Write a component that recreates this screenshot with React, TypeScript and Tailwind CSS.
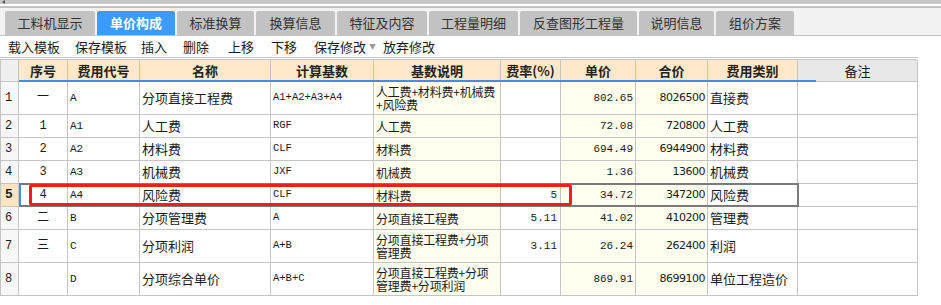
import React from "react";

const cols = "grid grid-cols-[18px_49px_72px_131px_103px_127px_60px_75px_72px_90px_120px]";
const cjk = "font-['Noto_Sans_CJK_SC',sans-serif]";
const mono = "font-['Liberation_Mono','Noto_Sans_CJK_SC',monospace]";

const tabs = ["工料机显示", "单价构成", "标准换算", "换算信息", "特征及内容", "工程量明细", "反查图形工程量", "说明信息", "组价方案"];
const tabWidths = ["w-[90px]", "w-[78px]", "w-[77px]", "w-[79px]", "w-[90px]", "w-[89px]", "w-[117px]", "w-[75px]", "w-[78px]"];
const tools = [
  { t: "载入模板", m: "mr-[15px]" },
  { t: "保存模板", m: "mr-[14px]" },
  { t: "插入", m: "mr-[16px]" },
  { t: "删除", m: "mr-[19px]" },
  { t: "上移", m: "mr-[17px]" },
  { t: "下移", m: "mr-[17px]" },
];

type Row = {
  no: string; idx: string; code: string; name: string; base: string; desc: string;
  rate: string; price: string; total: string; kind: string; h: string;
};

const rows: Row[] = [
  { no: "1", idx: "一", code: "A", name: "分项直接工程费", base: "A1+A2+A3+A4", desc: "人工费+材料费+机械费+风险费", rate: "", price: "802.65", total: "8026500", kind: "直接费", h: "h-[33px]" },
  { no: "2", idx: "1", code: "A1", name: "人工费", base: "RGF", desc: "人工费", rate: "", price: "72.08", total: "720800", kind: "人工费", h: "h-[23px]" },
  { no: "3", idx: "2", code: "A2", name: "材料费", base: "CLF", desc: "材料费", rate: "", price: "694.49", total: "6944900", kind: "材料费", h: "h-[23px]" },
  { no: "4", idx: "3", code: "A3", name: "机械费", base: "JXF", desc: "机械费", rate: "", price: "1.36", total: "13600", kind: "机械费", h: "h-[23px]" },
  { no: "5", idx: "4", code: "A4", name: "风险费", base: "CLF", desc: "材料费", rate: "5", price: "34.72", total: "347200", kind: "风险费", h: "h-[23px]" },
  { no: "6", idx: "二", code: "B", name: "分项管理费", base: "A", desc: "分项直接工程费", rate: "5.11", price: "41.02", total: "410200", kind: "管理费", h: "h-[23px]" },
  { no: "7", idx: "三", code: "C", name: "分项利润", base: "A+B", desc: "分项直接工程费+分项管理费", rate: "3.11", price: "26.24", total: "262400", kind: "利润", h: "h-[33px]" },
  { no: "8", idx: "", code: "D", name: "分项综合单价", base: "A+B+C", desc: "分项直接工程费+分项管理费+分项利润", rate: "", price: "869.91", total: "8699100", kind: "单位工程造价", h: "h-[33px]" },
];

const cell = "border-r border-b border-[#c4c4c4] flex items-center overflow-hidden";

export default function App() {
  return (
    <div className="w-[941px] h-[305px] bg-white overflow-hidden text-[#1a1a1a]">
      {/* top strip */}
      <div className="h-[4px] bg-[#c8c8c8] flex items-center pl-[2px]">
        <div className="w-0 h-0 border-y-[2px] border-y-transparent border-r-[3px] border-r-[#555]" />
      </div>
      <div className="h-[2px] bg-white" />
      <div className="h-[2px] bg-[#c2c2c2]" />
      <div className="h-[28px] bg-[#f2f2f2] border-b border-[#c2c2c2] flex items-end pl-[5px] gap-[2px]">
        {tabs.map((t, i) => (
          <div
            key={t}
            className={`${tabWidths[i]} h-[24px] rounded-t-[2px] flex items-center justify-center text-[13px] ${cjk} ${
              i === 1 ? "bg-[#3d9bff] text-white font-bold" : "bg-[#c2c2c2] text-[#333]"
            }`}
          >
            {t}
          </div>
        ))}
      </div>
      {/* toolbar */}
      <div className={`h-[22px] w-[918px] border-b border-[#c4c4c4] flex items-center pl-[8px] text-[13px] ${cjk}`}>
        {tools.map((t) => (
          <span key={t.t} className={t.m}>{t.t}</span>
        ))}
        <span>保存修改</span>
        <span className="text-[7px] text-[#999] ml-[3px] mr-[7px]">▼</span>
        <span>放弃修改</span>
      </div>
      {/* table */}
      <div className="mt-[1px] w-[917px] border-l border-t border-[#c4c4c4]">
        <div className={`${cols} h-[22px] text-[13px] font-bold ${cjk}`}>
          <div className={`${cell} bg-[#efefef]`} />
          {["序号", "费用代号", "名称", "计算基数", "基数说明", "费率(%)", "单价", "合价", "费用类别"].map((h) => (
            <div key={h} className={`${cell} justify-center bg-[#ffe7c9] text-[#222]`}>{h}</div>
          ))}
          <div className={`${cell} justify-center bg-[#e8e8e8] font-normal`}>备注</div>
        </div>
        <div className="h-[2px] w-[797px] bg-[#3d8fe8] -mt-[2px] ml-[18px] relative" />
        {rows.map((r) => {
          const sel = r.no === "5";
          return (
            <div key={r.no} className={`${cols} ${r.h} relative`}>
              <div className={`${cell} pl-[4px] text-[12px] ${mono} ${sel ? "bg-[#ffe4c2] font-bold text-[13px]" : "bg-[#f7f7f7]"}`}>{r.no}</div>
              <div className={`${cell} justify-center text-[12px] ${mono}`}>{r.idx}</div>
              <div className={`${cell} pl-[2px] text-[11px] ${mono}`}>{r.code}</div>
              <div className={`${cell} pl-[2px] text-[13px] ${cjk}`}>{r.name}</div>
              <div className={`${cell} pl-[2px] text-[10.5px] ${mono}`}>{r.base}</div>
              <div className={`${cell} pl-[2px] bg-[#fffff0] text-[12px] leading-[13px] tracking-[-0.2px] ${cjk}`}>{r.desc}</div>
              <div className={`${cell} justify-end pr-[3px] text-[11px] ${mono}`}>{r.rate}</div>
              <div className={`${cell} justify-end pr-[2px] bg-[#fffff0] text-[11px] ${mono}`}>{r.price}</div>
              <div className={`${cell} justify-end pr-[2px] bg-[#fffff0] text-[11px] font-['DejaVu_Sans',sans-serif] tracking-[-0.5px]`}>{r.total}</div>
              <div className={`${cell} pl-[2px] text-[13px] ${cjk}`}>{r.kind}</div>
              <div className={cell} />
              {sel && (
                <>
                  <div className="absolute left-[18px] top-[-1px] w-[780px] h-[24px] border-2 border-[#7a7a7a] border-l-[#3d8fe8] border-l-[2px] pointer-events-none" />
                  <div className="absolute left-[28px] top-[0px] w-[543px] h-[22px] border-[3px] border-[#ff1a1a] rounded-[3px] pointer-events-none" />
                </>
              )}
            </div>
          );
        })}
      </div>
    </div>
  );
}
